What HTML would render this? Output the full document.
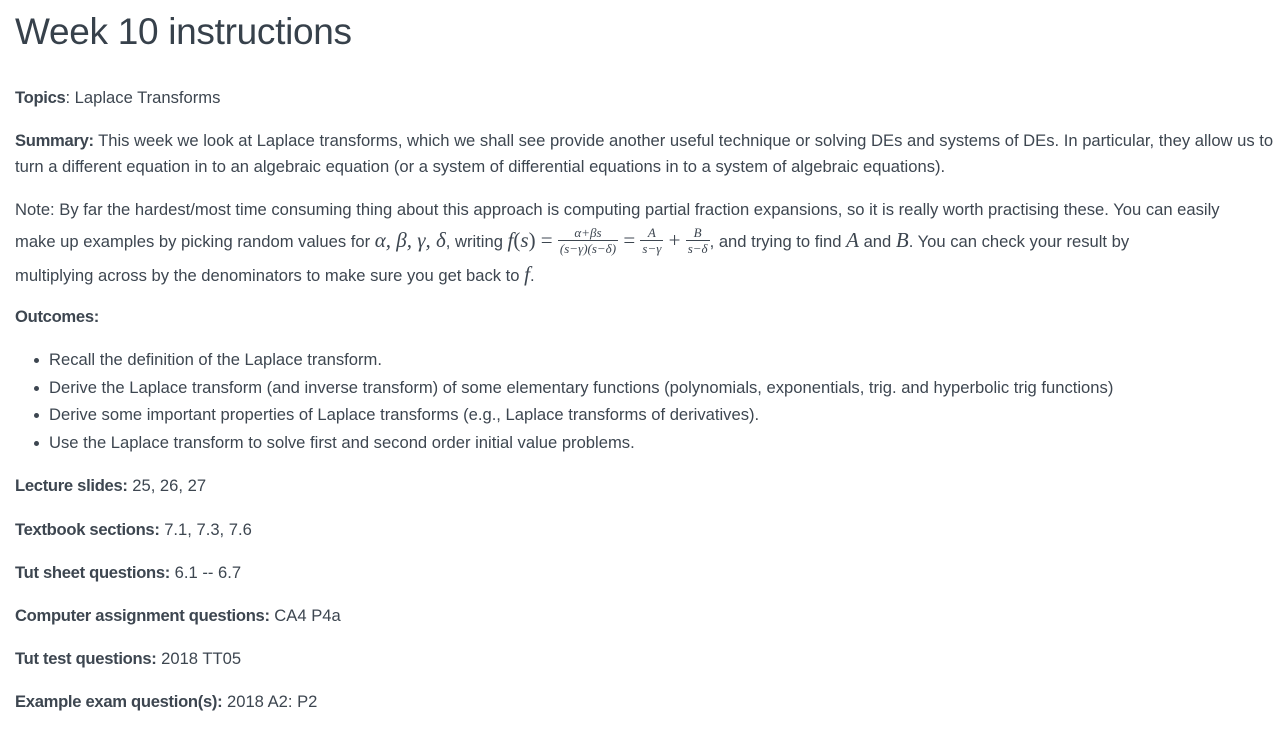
<!DOCTYPE html>
<html><head><meta charset="utf-8"><style>
body{margin:0;background:#fff;width:1288px;height:731px;overflow:hidden;font-family:"Liberation Sans",sans-serif;color:#3d4650;}
.l{position:absolute;left:15px;white-space:nowrap;font-size:16.6px;letter-spacing:0;line-height:20px;}
h1{position:absolute;left:15px;top:10px;margin:0;font-weight:normal;font-size:37px;line-height:44px;letter-spacing:-0.3px;color:#37414b;}
b{font-weight:bold;letter-spacing:-0.3px;}
.m{font-family:"Liberation Serif",serif;font-style:italic;font-size:21px;letter-spacing:0;}
.r{font-family:"Liberation Serif",serif;font-size:21px;letter-spacing:0;}
.f{display:inline-block;vertical-align:middle;text-align:center;font-family:"Liberation Serif",serif;font-size:13px;letter-spacing:0;line-height:15px;position:relative;top:-2px;}
.f span{display:block;padding:0 2px;}
.f span:first-child{border-bottom:1px solid #3d4650;font-style:italic;}
.f span:last-child{font-style:italic;}
.dot{position:absolute;left:34px;width:5px;height:5px;border-radius:50%;background:#3d4650;}
</style></head><body>
<h1>Week 10 instructions</h1>
<div class="l" style="top:88px"><b>Topics</b>: Laplace Transforms</div>
<div class="l" style="top:131px"><b>Summary:</b> This week we look at Laplace transforms, which we shall see provide another useful technique or solving DEs and systems of DEs. In particular, they allow us to</div>
<div class="l" style="top:157px">turn a different equation in to an algebraic equation (or a system of differential equations in to a system of algebraic equations).</div>
<div class="l" style="top:200px">Note: By far the hardest/most time consuming thing about this approach is computing partial fraction expansions, so it is really worth practising these. You can easily</div>
<div class="l" style="top:227px">make up examples by picking random values for <span class="m">α, β, γ, δ</span>, writing <span class="m">f</span><span class="r">(</span><span class="m">s</span><span class="r">) = </span><span class="f"><span>α+βs</span><span>(s−γ)(s−δ)</span></span><span class="r"> = </span><span class="f"><span>A</span><span>s−γ</span></span><span class="r"> + </span><span class="f"><span>B</span><span>s−δ</span></span>, and trying to find <span class="m">A</span> and <span class="m">B</span>. You can check your result by</div>
<div class="l" style="top:264px">multiplying across by the denominators to make sure you get back to <span class="m">f</span>.</div>
<div class="l" style="top:307px"><b>Outcomes:</b></div>
<div class="dot" style="top:358px"></div><div class="l" style="left:49px;top:350px">Recall the definition of the Laplace transform.</div>
<div class="dot" style="top:386px"></div><div class="l" style="left:49px;top:378px">Derive the Laplace transform (and inverse transform) of some elementary functions (polynomials, exponentials, trig. and hyperbolic trig functions)</div>
<div class="dot" style="top:413px"></div><div class="l" style="left:49px;top:405px">Derive some important properties of Laplace transforms (e.g., Laplace transforms of derivatives).</div>
<div class="dot" style="top:441px"></div><div class="l" style="left:49px;top:433px">Use the Laplace transform to solve first and second order initial value problems.</div>
<div class="l" style="top:476px"><b>Lecture slides:</b> 25, 26, 27</div>
<div class="l" style="top:520px"><b>Textbook sections:</b> 7.1, 7.3, 7.6</div>
<div class="l" style="top:563px"><b>Tut sheet questions:</b> 6.1 -- 6.7</div>
<div class="l" style="top:606px"><b>Computer assignment questions:</b> CA4 P4a</div>
<div class="l" style="top:649px"><b>Tut test questions:</b> 2018 TT05</div>
<div class="l" style="top:692px"><b>Example exam question(s):</b> 2018 A2: P2</div>
</body></html>
